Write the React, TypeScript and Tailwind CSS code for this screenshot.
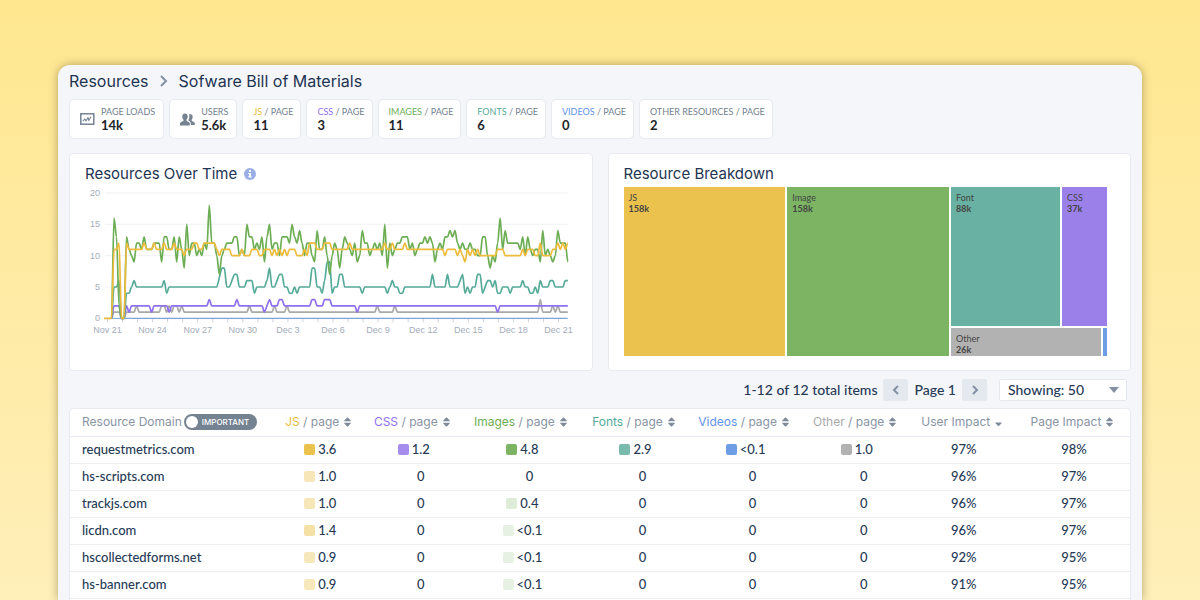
import React, { useState } from 'react';

type Frame = [number, number];

const imagesPerPage = [
  0, 16, 13, 2, 0, 0, 13, 11, 10, 9, 12, 12, 11, 13, 11, 11, 11, 12, 12, 12, 9, 13, 13, 11, 11, 13, 9, 13, 11, 8, 15,
  10, 12, 12, 10, 11, 10, 12, 11, 18, 12, 12, 10, 7, 10, 11, 12, 12, 12, 13, 13, 10, 11, 10, 15, 13, 13, 11, 12, 11,
  13, 9, 13, 15, 11, 12, 12, 10, 13, 13, 13, 12, 15, 13, 12, 14, 12, 10, 12, 12, 10, 9, 14, 11, 11, 13, 10, 7, 10, 12,
  11, 8, 11, 13, 12, 11, 10, 12, 9, 10, 14, 12, 12, 10, 11, 12, 11, 12, 10, 15, 8, 12, 10, 11, 12, 12, 13, 13, 13, 11,
  12, 10, 11, 12, 12, 13, 12, 13, 12, 9, 11, 12, 11, 13, 13, 14, 13, 14, 12, 11, 12, 11, 11, 12, 11, 11, 10, 10, 13,
  13, 10, 8, 10, 9, 12, 16, 11, 14, 12, 12, 12, 12, 12, 11, 13, 10, 13, 11, 10, 11, 11, 9, 14, 10, 11, 10, 9, 10, 14,
  12, 12, 12, 9,
].map((v, i): Frame => [i + 3, v]);

const jsPerPage: Frame[] = [
  [0, 0], [3, 0], [4, 11], [5, 11], [6, 12], [7, 0], [8, 0], [9, 12], [10, 11], [15, 11], [16, 12], [17, 11], [19, 11],
  [20, 12], [21, 11], [23, 11], [24, 12], [25, 11], [27, 11], [28, 12], [29, 11], [31, 11], [32, 10], [33, 11],
  [35, 11], [36, 12], [37, 12], [38, 11], [39, 11], [40, 12], [44, 12], [45, 11], [46, 10], [47, 11], [50, 11],
  [51, 10], [54, 10], [55, 11], [56, 10], [58, 10], [59, 11], [61, 11], [62, 10], [63, 10], [64, 11], [66, 11],
  [67, 10], [68, 11], [69, 10], [70, 11], [71, 10], [72, 11], [73, 10], [74, 11], [76, 11], [77, 10], [79, 10],
  [80, 11], [81, 10], [82, 12], [84, 12], [85, 11], [87, 11], [88, 12], [90, 12], [91, 11], [97, 11], [98, 12],
  [99, 11], [111, 11], [112, 12], [113, 11], [114, 11], [115, 12], [116, 11], [119, 11], [120, 12], [121, 11],
  [135, 11], [136, 10], [137, 11], [140, 11], [141, 10], [142, 11], [143, 10], [144, 9], [145, 11], [146, 10],
  [147, 11], [148, 10], [149, 11], [150, 10], [156, 10], [157, 11], [159, 11], [160, 10], [166, 10], [167, 11],
  [168, 10], [169, 11], [171, 11], [172, 10], [173, 10], [174, 12], [175, 10], [178, 10], [179, 11], [180, 11],
  [181, 12], [182, 11], [183, 12], [184, 11], [185, 12],
];

const fontsPerPage: Frame[] = [
  [3, 0], [4, 5], [5, 5], [6, 6], [7, 0], [8, 0], [9, 4], [10, 4], [11, 5], [12, 6], [13, 5], [23, 5], [24, 6], [25, 4],
  [26, 5], [45, 5], [47, 8], [48, 8], [49, 5], [50, 5], [52, 7], [53, 7], [54, 5], [56, 5], [57, 6], [59, 6], [60, 4],
  [61, 5], [64, 5], [65, 6], [66, 8], [67, 5], [68, 5], [70, 7], [71, 7], [72, 5], [73, 5], [74, 4], [75, 4], [76, 5],
  [77, 4], [78, 5], [82, 5], [83, 8], [84, 8], [85, 5], [86, 5], [87, 4], [88, 6], [89, 9], [90, 9], [91, 4], [92, 5],
  [93, 5], [94, 7], [95, 7], [96, 5], [102, 5], [103, 4], [104, 5], [112, 5], [113, 4], [114, 5], [115, 6], [116, 5],
  [117, 5], [118, 4], [119, 4], [120, 5], [130, 5], [131, 7], [132, 5], [136, 5], [137, 7], [138, 5], [141, 5],
  [143, 7], [144, 4], [145, 5], [146, 4], [147, 5], [148, 5], [149, 7], [150, 7], [151, 4], [153, 6], [154, 6],
  [155, 5], [156, 6], [157, 4], [158, 4], [159, 5], [161, 5], [162, 4], [163, 5], [166, 5], [167, 6], [168, 5],
  [169, 5], [170, 4], [171, 4], [172, 5], [173, 4], [174, 6], [175, 5], [177, 5], [178, 6], [179, 6], [180, 5],
  [183, 5], [184, 6], [185, 6],
];

const cssPerPage: Frame[] = [
  [3, 0], [4, 2], [6, 2], [7, 0], [8, 0], [9, 2], [10, 1], [11, 2], [18, 2], [19, 1], [20, 2], [25, 2], [26, 1],
  [27, 2], [41, 2], [42, 3], [43, 2], [52, 2], [53, 3], [54, 2], [63, 2], [64, 1], [66, 3], [67, 2], [69, 2], [70, 3],
  [71, 3], [72, 2], [82, 2], [83, 3], [84, 3], [85, 2], [87, 2], [88, 3], [90, 3], [91, 2], [100, 2], [101, 1],
  [102, 2], [156, 2], [157, 1], [158, 2], [185, 2],
];

const otherPerPage: Frame[] = [
  [3, 0], [4, 1], [6, 1], [7, 0], [8, 0], [9, 1], [12, 1], [13, 2], [14, 1], [22, 1], [23, 2], [24, 2], [25, 1],
  [26, 2], [27, 1], [28, 2], [29, 2], [30, 1], [31, 2], [32, 1], [57, 1], [58, 2], [59, 1], [67, 1], [68, 2], [69, 1],
  [72, 1], [73, 2], [74, 1], [108, 1], [109, 2], [110, 1], [115, 1], [116, 2], [117, 1], [173, 1], [174, 3], [175, 1],
  [178, 1], [179, 2], [180, 1], [181, 2], [182, 1], [185, 1],
];

const series = [
  { name: 'Other', color: '#a9a9a9', frames: otherPerPage },
  { name: 'CSS', color: '#8f70ee', frames: cssPerPage },
  { name: 'Fonts', color: '#55ab98', frames: fontsPerPage },
  { name: 'Images', color: '#6dae55', frames: imagesPerPage },
  { name: 'JS', color: '#eebc3c', frames: jsPerPage },
];

const dayLabels = [
  'Nov 21', 'Nov 24', 'Nov 27', 'Nov 30', 'Dec 3', 'Dec 6', 'Dec 9', 'Dec 12', 'Dec 15', 'Dec 18', 'Dec 21',
];

const xAt = (i: number) => 19 + i * 2.51;
const yAt = (v: number) => 132.5 - v * 6.28;

const toPath = (frames: Frame[]) =>
  frames
    .map(([i, v], n) => {
      const x = xAt(i);
      const y = yAt(v);
      if (n === 0) return `M${x},${y}`;
      const px = xAt(frames[n - 1][0]);
      const py = yAt(frames[n - 1][1]);
      const bend = Math.min(x - px, 2.51) * 0.3;
      return `C${px + bend},${py} ${x - bend},${y} ${x},${y}`;
    })
    .join(' ');

const stats = [
  { label: 'JS', suffix: ' / PAGE', color: 'text-[#eebc3c]', value: '11' },
  { label: 'CSS', suffix: ' / PAGE', color: 'text-[#8f70ee]', value: '3' },
  { label: 'IMAGES', suffix: ' / PAGE', color: 'text-[#6dae55]', value: '11' },
  { label: 'FONTS', suffix: ' / PAGE', color: 'text-[#55ab98]', value: '6' },
  { label: 'VIDEOS', suffix: ' / PAGE', color: 'text-[#5f93e8]', value: '0' },
  { label: 'OTHER RESOURCES', suffix: ' / PAGE', color: 'text-[#727f90]', value: '2' },
];

const columns = [
  { label: 'JS', color: 'text-[#eebc3c]', swatch: 'bg-[#ebc24d]', width: 'w-[92px]' },
  { label: 'CSS', color: 'text-[#8f70ee]', swatch: 'bg-[#9c80ea]', width: 'w-[95px]' },
  { label: 'Images', color: 'text-[#6dae55]', swatch: 'bg-[#7cb463]', width: 'w-[122px]' },
  { label: 'Fonts', color: 'text-[#55ab98]', swatch: 'bg-[#69b2a3]', width: 'w-[104px]' },
  { label: 'Videos', color: 'text-[#5f93e8]', swatch: 'bg-[#6d9de5]', width: 'w-[116px]' },
  { label: 'Other', color: 'text-[#a9a9a9]', swatch: 'bg-[#b2b2b2]', width: 'w-[106px]' },
];

// each cell is a value and the strength of its swatch
const rows: { domain: string; cells: [string, number][]; user: string; page: string }[] = [
  {
    domain: 'requestmetrics.com',
    cells: [['3.6', 1], ['1.2', 0.9], ['4.8', 1], ['2.9', 0.9], ['<0.1', 1], ['1.0', 1]],
    user: '97%',
    page: '98%',
  },
  {
    domain: 'hs-scripts.com',
    cells: [['1.0', 0.4], ['0', 0], ['0', 0], ['0', 0], ['0', 0], ['0', 0]],
    user: '96%',
    page: '97%',
  },
  {
    domain: 'trackjs.com',
    cells: [['1.0', 0.4], ['0', 0], ['0.4', 0.25], ['0', 0], ['0', 0], ['0', 0]],
    user: '96%',
    page: '97%',
  },
  {
    domain: 'licdn.com',
    cells: [['1.4', 0.5], ['0', 0], ['<0.1', 0.18], ['0', 0], ['0', 0], ['0', 0]],
    user: '96%',
    page: '97%',
  },
  {
    domain: 'hscollectedforms.net',
    cells: [['0.9', 0.38], ['0', 0], ['<0.1', 0.18], ['0', 0], ['0', 0], ['0', 0]],
    user: '92%',
    page: '95%',
  },
  {
    domain: 'hs-banner.com',
    cells: [['0.9', 0.38], ['0', 0], ['<0.1', 0.18], ['0', 0], ['0', 0], ['0', 0]],
    user: '91%',
    page: '95%',
  },
];

const Chevron: React.FC<{ d: string; className: string }> = ({ d, className }) => (
  <svg viewBox="0 0 10 12" className={className} fill="none" stroke="currentColor" strokeWidth="2" aria-hidden="true">
    <path d={d} />
  </svg>
);

const SortIcon: React.FC<{ active?: boolean }> = ({ active }) => (
  <svg viewBox="0 0 7 10" className="h-[10px] w-[7px] shrink-0 text-[#7f8b9b]" fill="currentColor" aria-hidden="true">
    {active ? (
      <path d="M.6 5.4h5.8c.4 0 .6.4.3.7L3.9 9c-.2.2-.6.2-.8 0L.3 6.1c-.3-.3-.1-.7.3-.7z" />
    ) : (
      <>
        <path d="M.6 4.2h5.8c.4 0 .6-.4.3-.7L3.9.6c-.2-.2-.6-.2-.8 0L.3 3.5c-.3.3-.1.7.3.7z" />
        <path d="M.6 5.8h5.8c.4 0 .6.4.3.7L3.9 9.4c-.2.2-.6.2-.8 0L.3 6.5c-.3-.3-.1-.7.3-.7z" />
      </>
    )}
  </svg>
);

const StatCard: React.FC<{ children: React.ReactNode; icon?: React.ReactNode; value: string }> = ({
  children,
  icon,
  value,
}) => (
  <div
    className={`flex h-10 items-center gap-[6px] rounded-[5px] border border-[#e7eaf0] bg-white ${
      icon ? 'pr-2 pl-[10px]' : 'pr-[7px] pl-[10px]'
    }`}
  >
    {icon}
    <div>
      <div className="text-[9px] leading-[11px] whitespace-nowrap text-[#727f90]">{children}</div>
      <div className="text-[13px] leading-4 font-bold text-[#212429]">{value}</div>
    </div>
  </div>
);

const ResourcesChart: React.FC = () => (
  <svg viewBox="0 0 492 152" className="w-full" role="img" aria-label="Resources Over Time">
    {[20, 15, 10, 5].map((v) => (
      <path key={v} d={`M20 ${yAt(v)}H483`} stroke="#f0f1f3" />
    ))}
    {Array.from({ length: 31 }, (_, i) => (
      <path key={i} d={`M${22.5 + i * 15.05} 132.5v4`} stroke="#cfd4da" />
    ))}
    <g fill="#a3acb9" fontFamily="Liberation Sans, Arial, sans-serif" fontSize="9">
      {[20, 15, 10, 5, 0].map((v) => (
        <text key={v} x="15" y={yAt(v) + 3} textAnchor="end">
          {v}
        </text>
      ))}
      {dayLabels.map((label, i) => (
        <text key={label} x={22.5 + i * 45.15} y="147" textAnchor="middle">
          {label}
        </text>
      ))}
    </g>
    {series.slice(0, 4).map((s) => (
      <path key={s.name} d={toPath(s.frames)} fill="none" stroke={s.color} strokeWidth="1.7" strokeLinejoin="round" />
    ))}
    <path d="M19 132.5H483" stroke="#7ba3d9" />
    <path d={toPath(series[4].frames)} fill="none" stroke={series[4].color} strokeWidth="1.7" strokeLinejoin="round" />
    <path d="M40 132.5H483" stroke="#7ba3d9" />
  </svg>
);

const Tile: React.FC<{ className: string; label?: string; value?: string }> = ({ className, label, value }) => (
  <div className={`overflow-hidden px-[5px] pt-[5px] text-[9px] leading-[11px] text-[#444] ${className}`}>
    <div>{label}</div>
    <div className="font-bold">{value}</div>
  </div>
);

const App: React.FC = () => {
  const [important, setImportant] = useState(false);

  return (
    <div className="flex h-screen flex-col overflow-hidden bg-linear-to-b from-[#ffe78f] to-[#ffefb9] px-[58px] pt-[65px] font-['Lato','Open_Sans',sans-serif] text-[#263a56]">
      <main className="flex min-h-0 flex-1 flex-col rounded-t-[12px] bg-[#f5f6fa] px-[11px] shadow-[0_0_10px_rgba(60,50,0,0.4)]">
        <nav className="flex h-8 items-center gap-[10px] font-['Inter',sans-serif] text-base text-[#1d3451]">
          <a href="#resources">Resources</a>
          <Chevron d="M2 1l5 5-5 5" className="h-3 w-[10px] text-[#8390a3]" />
          <h1>Sofware Bill of Materials</h1>
        </nav>

        <section className="mt-[2px] flex shrink-0 gap-[5px]">
          <StatCard
            value="14k"
            icon={
              <svg viewBox="0 0 15 12" className="h-3 w-[15px]" fill="none" stroke="#748292" aria-hidden="true">
                <rect x=".8" y=".8" width="13" height="10.4" strokeWidth="1.5" />
                <path d="M2.8 8.2l2-2 1.2 1.6 2-3 .9 2.6 2-3.6" strokeWidth="1.1" />
              </svg>
            }
          >
            PAGE LOADS
          </StatCard>
          <StatCard
            value="5.6k"
            icon={
              <svg viewBox="0 0 15 13" className="h-[13px] w-[15px]" fill="#748292" aria-hidden="true">
                <path d="M5 .5c1.700 0 2.700 1.200 2.700 3 0 1.300-.5 2.300-1.200 3v1.300c0 .4 2.200 1 2.900 1.800.5.500.5 1.400.5 2.900H0c0-1.500 0-2.400.5-2.900.700-.8 3-1.400 3-1.800V6.500C2.800 5.800 2.300 4.800 2.300 3.500 2.300 1.700 3.300.5 5 .5z" />
                <path d="M10.300 1.200c1.500 0 2.400 1.100 2.400 2.700 0 1.100-.4 2-1 2.600v1.200c0 .4 1.900.9 2.600 1.600.5.500.5 1.400.5 2.700h-4c0-1.800-.1-2.800-.9-3.500-.4-.4-.9-.7-1.500-.9V6.900c.6-.8 1-1.900 1-3.200 0-.8-.2-1.500-.4-2.100.4-.3.8-.4 1.300-.4z" />
              </svg>
            }
          >
            USERS
          </StatCard>
          {stats.map((s) => (
            <StatCard key={s.label} value={s.value}>
              <span className={s.color}>{s.label}</span>
              {s.suffix}
            </StatCard>
          ))}
        </section>

        <section className="mt-[14px] grid shrink-0 grid-cols-2 gap-[15px]">
          <div className="h-[218px] rounded border border-[#e9ebf0] bg-white px-[15px] pt-2">
            <h2 className="flex h-6 items-center gap-[7px] font-['Inter',sans-serif] text-[15px] text-[#1d3451]">
              Resources Over Time
              <svg viewBox="0 0 12 12" className="h-3 w-3" aria-hidden="true">
                <circle cx="6" cy="6" r="6" fill="#9aaee6" />
                <path d="M5 2h2v1.800H5zM4.200 4.900h2.700v3.500h.9v1.200H4.200V8.400h.9V6.100h-.9z" fill="#fff" />
              </svg>
            </h2>
            <ResourcesChart />
          </div>
          <div className="flex h-[218px] flex-col rounded border border-[#e9ebf0] bg-white pt-2 pr-[23px] pb-[14px] pl-[15px]">
            <h2 className="h-6 font-['Inter',sans-serif] text-[15px] leading-6 text-[#1d3451]">Resource Breakdown</h2>
            <div className="mt-[1px] flex flex-1 gap-[2px]">
              <Tile className="flex-1 bg-[#ebc24d]" label="JS" value="158k" />
              <Tile className="flex-1 bg-[#7cb463]" label="Image" value="158k" />
              <div className="flex w-[156px] flex-col gap-[2px]">
                <div className="flex flex-1 gap-[2px]">
                  <Tile className="flex-1 bg-[#69b2a3]" label="Font" value="88k" />
                  <Tile className="w-[45px] bg-[#9c80ea]" label="CSS" value="37k" />
                </div>
                <div className="flex h-7 gap-[2px]">
                  <Tile className="flex-1 bg-[#b2b2b2]" label="Other" value="26k" />
                  <div className="w-1 bg-[#6d9de5]" />
                </div>
              </div>
            </div>
          </div>
        </section>

        <section className="flex h-[37px] shrink-0 items-center justify-end gap-[6px] pr-1 text-sm font-medium">
          <span>1-12 of 12 total items</span>
          <button aria-label="Previous page" className="flex h-[22px] w-[25px] items-center justify-center rounded-xs bg-[#e4e9f0]">
            <Chevron d="M7 2L3 6l4 4" className="h-3 w-[10px] text-[#8390a3]" />
          </button>
          <span>Page 1</span>
          <button aria-label="Next page" className="flex h-[22px] w-[25px] items-center justify-center rounded-xs bg-[#e4e9f0]">
            <Chevron d="M3 2l4 4-4 4" className="h-3 w-[10px] text-[#8390a3]" />
          </button>
          <div className="relative ml-[6px]">
            <select
              aria-label="Items per page"
              className="block h-[22px] w-[128px] appearance-none rounded-xs border border-[#e4e8ee] bg-white pl-2"
            >
              <option>Showing: 50</option>
              <option>Showing: 100</option>
            </select>
            <svg viewBox="0 0 10 6" className="absolute top-2 right-2 h-[6px] w-[10px]" fill="#8390a3" aria-hidden="true">
              <path d="M0 0h10L5 6z" />
            </svg>
          </div>
        </section>

        <section className="min-h-0 flex-1 overflow-hidden rounded-t-[5px] border border-b-0 border-[#e7eaf0] bg-white">
          <table className="w-full table-fixed text-[13px] font-medium">
            <colgroup>
              <col className="w-[204px]" />
              {columns.map((c) => (
                <col key={c.label} className={c.width} />
              ))}
              <col className="w-[108px]" />
              <col className="w-[112px]" />
            </colgroup>
            <thead className="font-['Inter',sans-serif] text-xs text-[#8994a4]">
              <tr className="h-[27px] border-b border-[#e7eaf0]">
                <th className="pl-3 text-left font-normal">
                  <div className="flex items-center gap-[2px] whitespace-nowrap">
                    Resource Domain
                    <label className="flex h-4 items-center gap-1 rounded-full bg-[#748292] pr-2 pl-[2px] text-[8px] font-medium text-white">
                      <input
                        type="checkbox"
                        role="switch"
                        checked={important}
                        onChange={() => setImportant(!important)}
                        className="h-3 w-3 appearance-none rounded-full bg-white"
                      />
                      IMPORTANT
                    </label>
                  </div>
                </th>
                {columns.map((c) => (
                  <th key={c.label} className="pr-1 font-normal">
                    <button className="inline-flex items-center gap-[5px] whitespace-nowrap">
                      <span>
                        <span className={c.color}>{c.label}</span> / page
                      </span>
                      <SortIcon />
                    </button>
                  </th>
                ))}
                <th className="pr-1 font-normal">
                  <button className="inline-flex items-center gap-[5px] whitespace-nowrap">
                    User Impact
                    <SortIcon active />
                  </button>
                </th>
                <th className="pr-1 font-normal">
                  <button className="inline-flex items-center gap-[5px] whitespace-nowrap">
                    Page Impact
                    <SortIcon />
                  </button>
                </th>
              </tr>
            </thead>
            <tbody>
              {rows.map((row) => (
                <tr key={row.domain} className="h-[27px] border-b border-[#edeff2]">
                  <td className="pl-3">{row.domain}</td>
                  {row.cells.map(([value, strength], i) => (
                    <td key={columns[i].label}>
                      <div className="flex items-center justify-center gap-[3px]">
                        <span
                          className={`h-[11px] w-[11px] rounded-xs ${columns[i].swatch}`}
                          style={{ opacity: strength }}
                        />
                        {value}
                      </div>
                    </td>
                  ))}
                  <td className="text-center">{row.user}</td>
                  <td className="text-center">{row.page}</td>
                </tr>
              ))}
            </tbody>
          </table>
        </section>
      </main>
    </div>
  );
};

export default App;
